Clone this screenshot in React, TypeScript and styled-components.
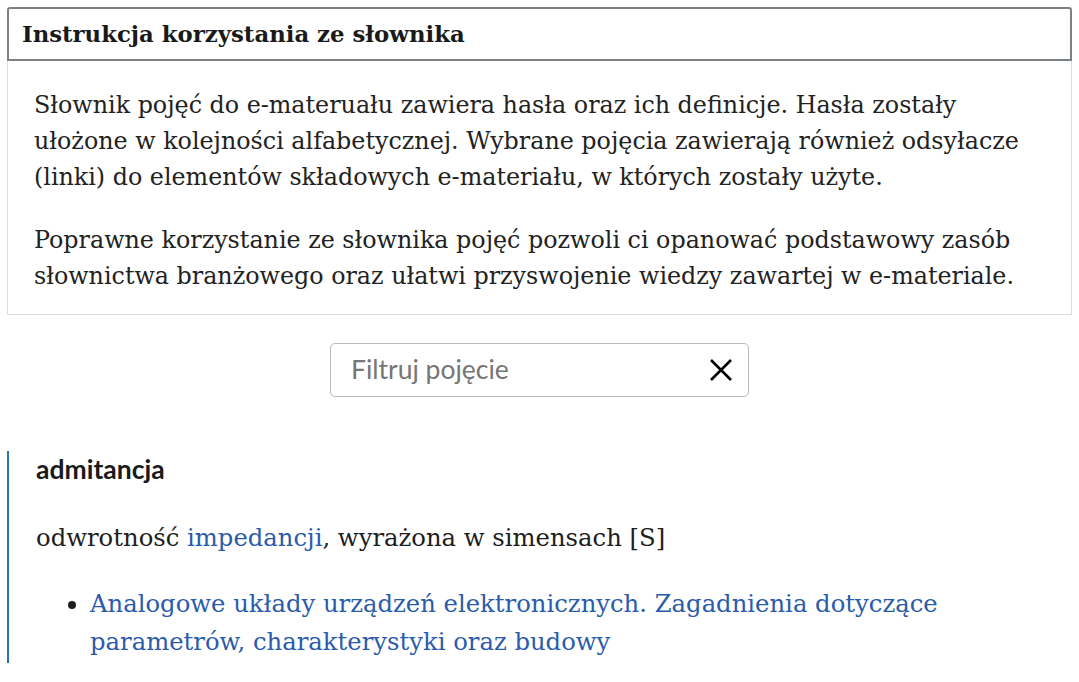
import React from "react";
import styled, { createGlobalStyle } from "styled-components";

const GlobalStyle = createGlobalStyle`
  body {
    margin: 0;
    background: #ffffff;
    color: #1e1e1e;
    font-family: "DejaVu Serif", "Liberation Serif", serif;
  }
`;

const Page = styled.div`
  padding: 7px 7px 0 7px;
  display: flex;
  flex-direction: column;
`;

const InfoHeader = styled.div`
  border: 2px solid #7c8185;
  border-radius: 3px 3px 0 0;
  padding: 11px 13px 10px 13px;
  font-weight: bold;
  font-size: 22.8px;
  line-height: 29px;
  color: #1a1a1a;
`;

const InfoBody = styled.div`
  border: 1px solid #dcdcdc;
  border-top: none;
  padding: 26px 26px 20px 26px;
`;

const Para = styled.p`
  margin: 0 0 27px 0;
  font-size: 23.8px;
  line-height: 36px;
  color: #222;

  &:last-child {
    margin-bottom: 0;
  }
`;

const SearchRow = styled.div`
  display: flex;
  justify-content: center;
  padding: 28px 0 54px 0;
`;

const SearchBox = styled.div`
  width: 419px;
  height: 54px;
  box-sizing: border-box;
  border: 1px solid #b9b9b9;
  border-radius: 5px;
  display: flex;
  align-items: center;
  padding: 0 14px 0 20px;
`;

const SearchInput = styled.input`
  flex: 1;
  border: none;
  outline: none;
  font-family: Lato, sans-serif;
  font-size: 26.5px;
  color: #333;
  padding: 0 0 3px 0;

  &::placeholder {
    color: #767676;
  }
`;

const ClearButton = styled.button`
  border: none;
  background: none;
  padding: 0;
  width: 26px;
  height: 26px;
  display: flex;
  align-items: center;
  justify-content: center;
  cursor: pointer;
`;

const Entry = styled.section`
  border-left: 2px solid #2a73b3;
  padding: 3px 0 2px 27px;
`;

const Term = styled.h3`
  margin: 0;
  font-family: Lato, sans-serif;
  font-weight: bold;
  font-size: 26.5px;
  line-height: 30px;
  color: #1a1a1a;
`;

const Definition = styled.p`
  margin: 35px 0 0 0;
  font-size: 24.3px;
  line-height: 38px;
  color: #1e1e1e;
`;

const Link = styled.a`
  color: #2b5cab;
  text-decoration: none;
`;

const Refs = styled.ul`
  margin: 28px 0 0 0;
  padding-left: 54px;
  font-size: 24.3px;
  line-height: 38px;
  color: #1e1e1e;
`;

const XIcon = () => (
  <svg width="24" height="24" viewBox="0 0 24 24" fill="none">
    <path d="M2 2 L22 22 M22 2 L2 22" stroke="#000" strokeWidth="2.6" />
  </svg>
);

export default function App() {
  return (
    <>
      <GlobalStyle />
      <Page>
        <InfoHeader>Instrukcja korzystania ze słownika</InfoHeader>
        <InfoBody>
          <Para>
            Słownik pojęć do e-materuału zawiera hasła oraz ich definicje. Hasła zostały
            ułożone w kolejności alfabetycznej. Wybrane pojęcia zawierają również odsyłacze
            (linki) do elementów składowych e-materiału, w których zostały użyte.
          </Para>
          <Para>
            Poprawne korzystanie ze słownika pojęć pozwoli ci opanować podstawowy zasób
            słownictwa branżowego oraz ułatwi przyswojenie wiedzy zawartej w e-materiale.
          </Para>
        </InfoBody>
        <SearchRow>
          <SearchBox>
            <SearchInput placeholder="Filtruj pojęcie" />
            <ClearButton aria-label="Wyczyść">
              <XIcon />
            </ClearButton>
          </SearchBox>
        </SearchRow>
        <Entry>
          <Term>admitancja</Term>
          <Definition>
            odwrotność <Link href="#">impedancji</Link>, wyrażona w simensach [S]
          </Definition>
          <Refs>
            <li>
              <Link href="#">
                Analogowe układy urządzeń elektronicznych. Zagadnienia dotyczące
                parametrów, charakterystyki oraz budowy
              </Link>
            </li>
          </Refs>
        </Entry>
      </Page>
    </>
  );
}
